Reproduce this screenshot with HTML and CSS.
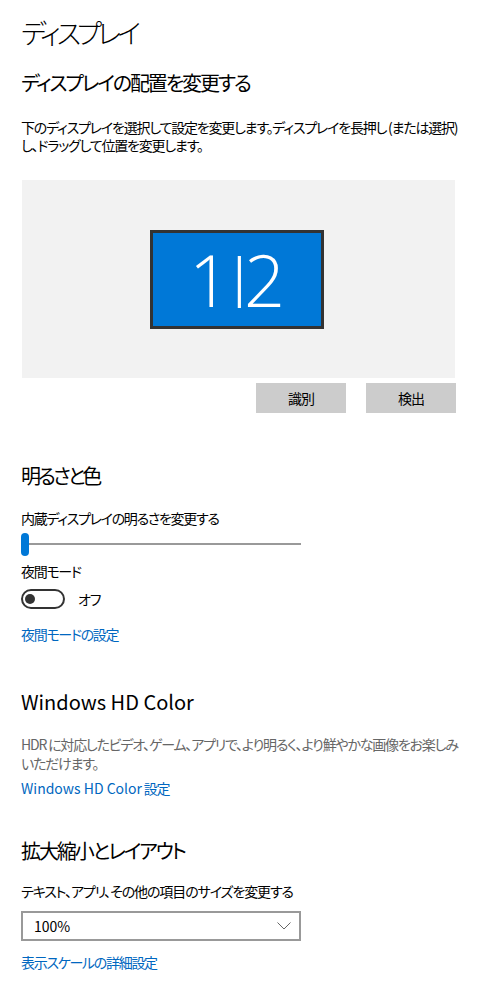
FILE: index.html
```html
<!DOCTYPE html>
<html lang="ja">
<head>
    <meta charset="UTF-8">
    <title>ディスプレイ</title>
    <link rel="stylesheet" href="styles.css">
</head>
<body>
<div class="Page">
    <h1 class="PageTitle">ディスプレイ</h1>

    <!-- arrangement -->
    <h2 class="SectionTitle">ディスプレイの配置を変更する</h2>
    <p class="Description">下のディスプレイを選択して設定を変更します。ディスプレイを長押し (または選択)<br>し、ドラッグして位置を変更します。</p>
    <div class="Arrangement">
        <div class="Monitor"><span class="MonitorFirst">1</span><span class="MonitorBar">|</span>2</div>
    </div>
    <div class="ArrangementControls">
        <button class="GrayButton" type="button">識別</button>
        <button class="GrayButton" type="button">検出</button>
    </div>

    <!-- brightness -->
    <h2 class="SectionTitle BrightnessTitle">明るさと色</h2>
    <div class="FieldLabel BrightnessLabel">内蔵ディスプレイの明るさを変更する</div>
    <div class="Slider">
        <span class="SliderThumb"></span>
        <span class="SliderTrack"></span>
    </div>
    <div class="FieldLabel NightLabel">夜間モード</div>
    <div class="ToggleRow">
        <span class="Toggle"><span class="ToggleKnob"></span></span>
        <span class="ToggleText">オフ</span>
    </div>
    <a class="SettingsLink NightLink" href="#">夜間モードの設定</a>

    <!-- hd color -->
    <h2 class="SectionTitle HdTitle">Windows HD Color</h2>
    <p class="Description Muted">HDR に対応したビデオ、ゲーム、アプリで、より明るく、より鮮やかな画像をお楽しみ<br>いただけます。</p>
    <a class="SettingsLink HdLink" href="#"><span class="Latin">Windows HD Color</span> 設定</a>

    <!-- scale -->
    <h2 class="SectionTitle ScaleTitle">拡大縮小とレイアウト</h2>
    <div class="FieldLabel ScaleLabel">テキスト、アプリ、その他の項目のサイズを変更する</div>
    <div class="Dropdown">
        <span>100%</span>
        <svg class="Chevron" width="14" height="8" viewBox="0 0 14 8">
            <polyline points="0.5,0.5 7,7 13.5,0.5" fill="none" stroke="#666" stroke-width="1"/>
        </svg>
    </div>
    <a class="SettingsLink ScaleLink" href="#">表示スケールの詳細設定</a>
</div>
</body>
</html>
```

FILE: styles.css
```css
body {
    margin: 0;
    background: #fff;
    color: #000;
    font-family: "Noto Sans CJK JP", sans-serif;
    font-feature-settings: "palt";
}

.Page {
    width: 460px;
    padding: 13px 0 0 21px;
}

.PageTitle {
    margin: 0;
    font-size: 27px;
    font-weight: 300;
    line-height: 40px;
    letter-spacing: -4.2px;
}

.SectionTitle {
    margin: 16px 0 0 0;
    font-size: 20px;
    font-weight: 400;
    line-height: 28px;
    letter-spacing: -2.1px;
}

.Description {
    margin: 21px 0 0 0;
    font-size: 14px;
    line-height: 18px;
    letter-spacing: -1.2px;
}

.Description.Muted {
    margin-top: 19px;
    line-height: 19px;
    color: #666;
}

.Latin {
    letter-spacing: 0;
}

.Arrangement {
    display: flex;
    align-items: center;
    justify-content: center;
    width: 433px;
    height: 198px;
    margin: 26px 0 0 1px;
    background: #f2f2f2;
}

.Monitor {
    width: 168px;
    height: 93px;
    margin-right: 3px;
    border: 3px solid #333;
    background: #0078d7;
    color: #fff;
    font-family: "Open Sans", sans-serif;
    font-weight: 300;
    font-size: 72px;
    line-height: 93px;
    text-align: center;
}

.MonitorFirst {
    letter-spacing: -10px;
}

.MonitorBar {
    display: inline-block;
    line-height: 1em;
    letter-spacing: -15px;
    transform: translateY(-0.057em) scaleY(0.724);
}

.ArrangementControls {
    display: flex;
    justify-content: flex-end;
    gap: 20px;
    width: 435px;
    margin-top: 5px;
}

.GrayButton {
    width: 90px;
    height: 30px;
    border: none;
    padding: 0;
    background: #ccc;
    color: #000;
    font-family: inherit;
    font-size: 14px;
    letter-spacing: -1px;
}

.FieldLabel {
    font-size: 14px;
    line-height: 20px;
    letter-spacing: -1.3px;
}

.BrightnessTitle {
    margin-top: 49px;
    letter-spacing: -3px;
}

.BrightnessLabel {
    margin-top: 18px;
}

.Slider {
    display: flex;
    align-items: center;
    width: 280px;
    height: 24px;
    margin-top: 4px;
}

.SliderThumb {
    width: 8px;
    height: 23px;
    border-radius: 4px;
    background: #0078d7;
}

.SliderTrack {
    flex: 1;
    height: 2px;
    background: #999;
}

.NightLabel {
    margin-top: 5px;
}

.ToggleRow {
    display: flex;
    align-items: center;
    gap: 13px;
    height: 20px;
    margin-top: 8px;
    font-size: 14px;
    letter-spacing: -1.2px;
}

.Toggle {
    display: flex;
    align-items: center;
    box-sizing: border-box;
    width: 44px;
    height: 20px;
    padding-left: 2px;
    border: 2px solid #333;
    border-radius: 10px;
}

.ToggleKnob {
    width: 10px;
    height: 10px;
    border-radius: 50%;
    background: #333;
}

.SettingsLink {
    display: block;
    color: #0067c0;
    font-size: 14px;
    line-height: 20px;
    letter-spacing: -1.3px;
    text-decoration: none;
}

.NightLink {
    margin-top: 15px;
}

.HdTitle {
    margin-top: 44px;
    letter-spacing: 0;
}

.HdLink {
    margin-top: 5px;
}

.ScaleTitle {
    margin-top: 39px;
}

.ScaleLabel {
    margin-top: 16px;
    letter-spacing: -1.1px;
}

.Dropdown {
    display: flex;
    align-items: center;
    justify-content: space-between;
    box-sizing: border-box;
    width: 280px;
    height: 30px;
    margin-top: 10px;
    padding: 0 8px 0 11px;
    border: 2px solid #999;
    font-size: 14px;
}

.ScaleLink {
    margin-top: 11px;
}
```
